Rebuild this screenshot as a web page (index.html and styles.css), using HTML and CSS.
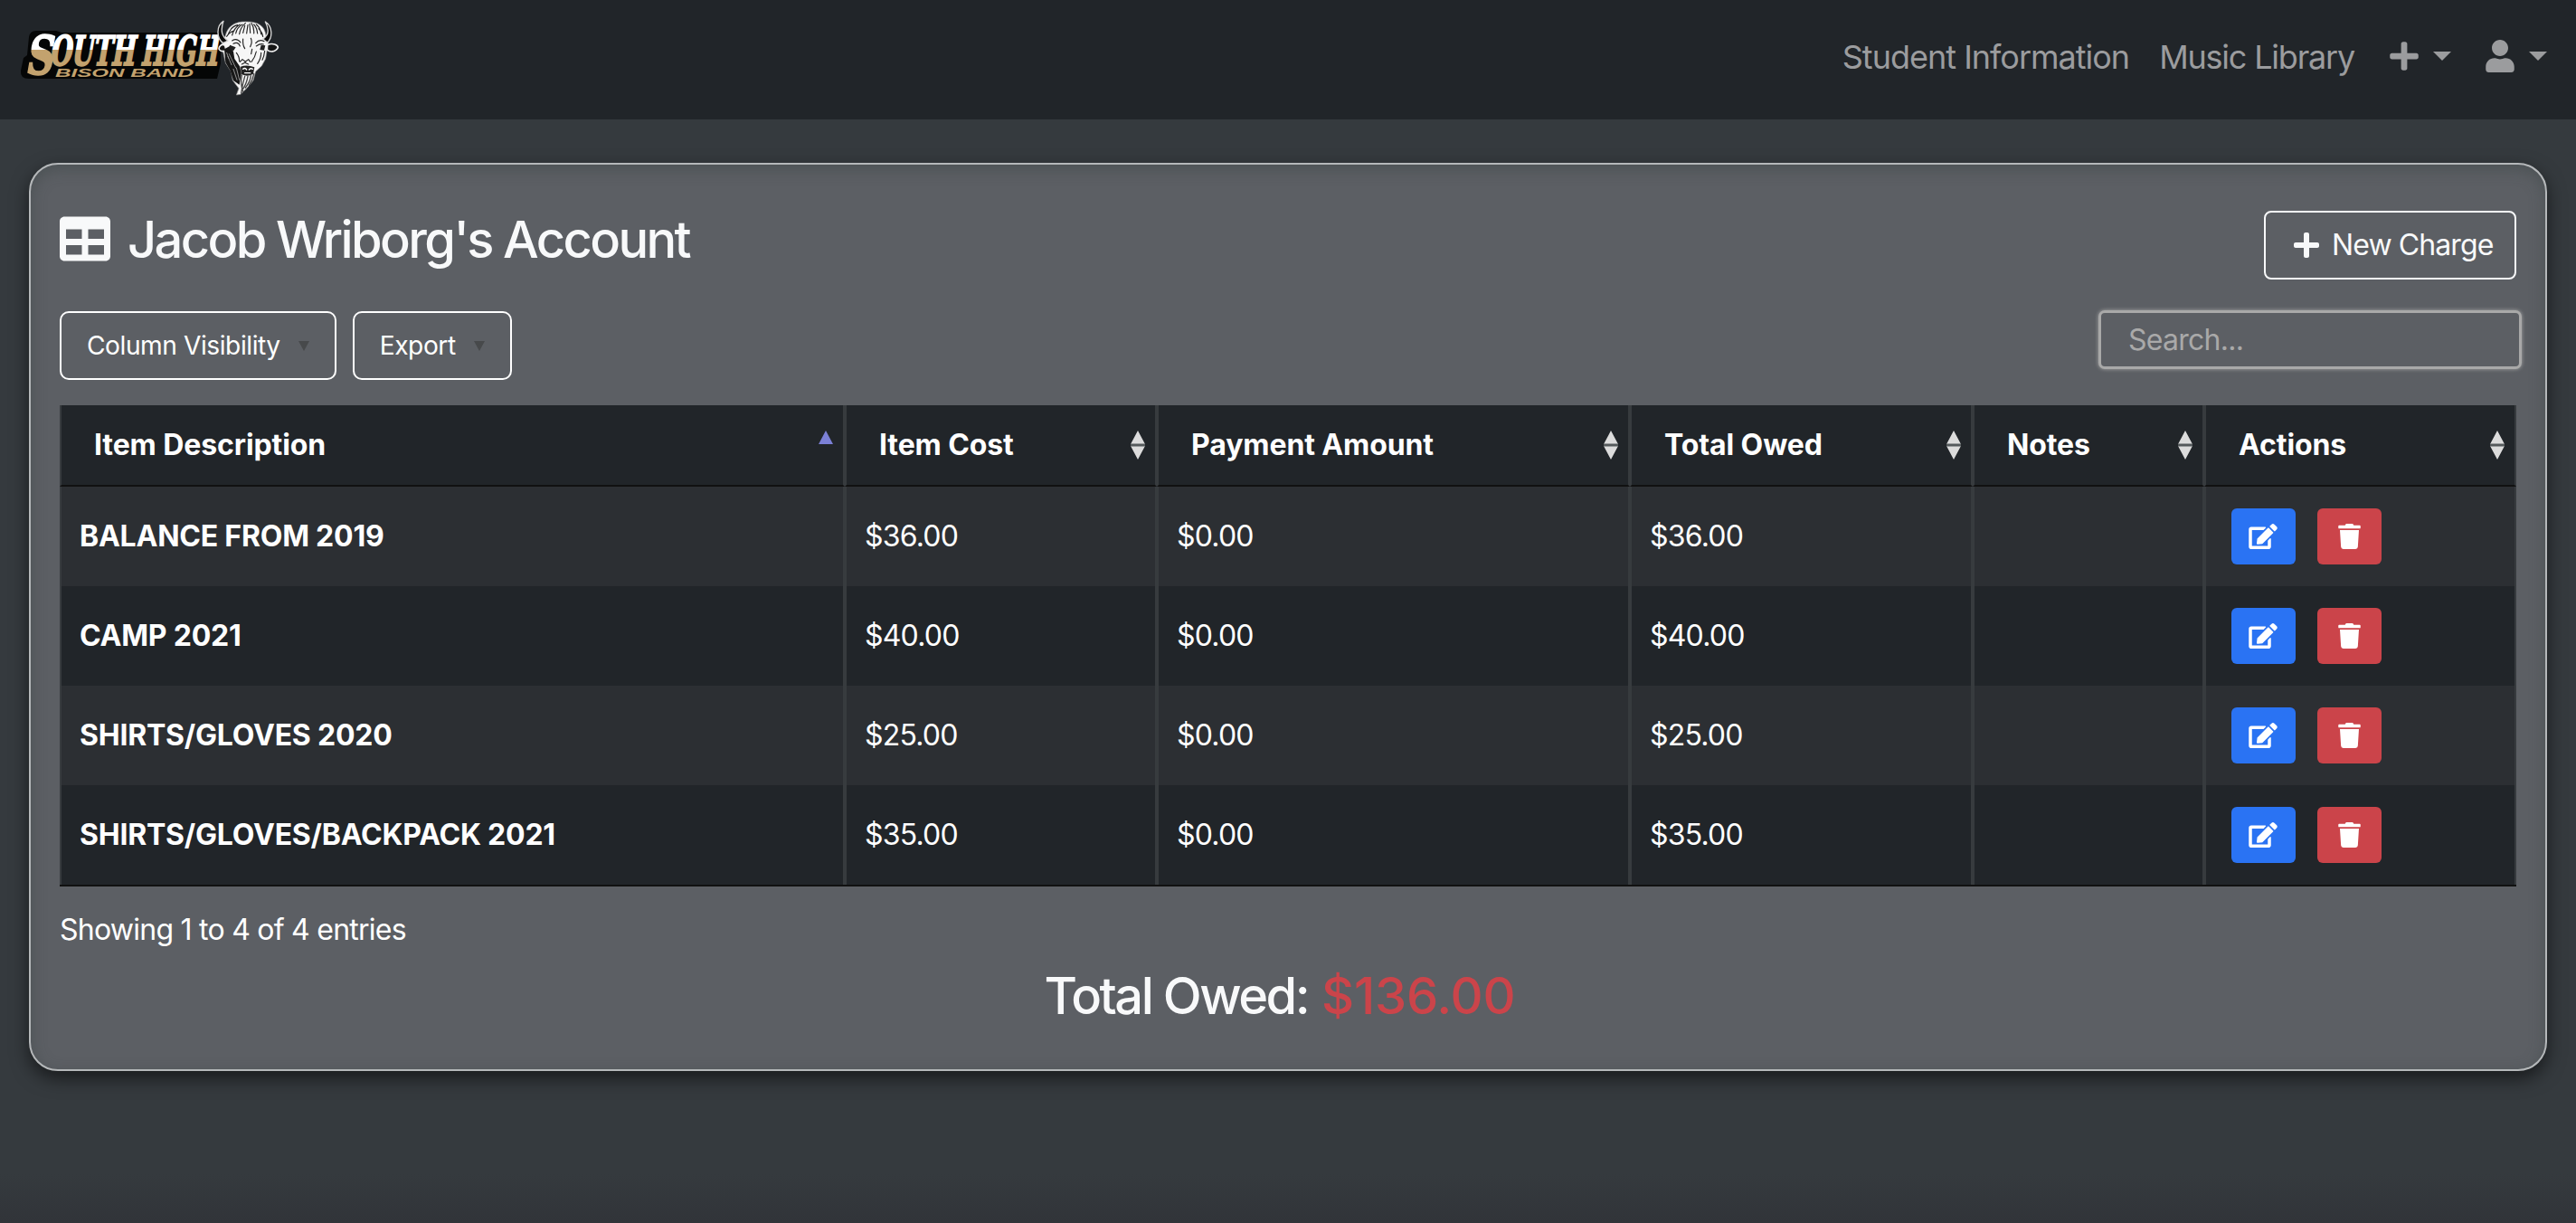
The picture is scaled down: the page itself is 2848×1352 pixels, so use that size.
FILE: index.html
```
<!DOCTYPE html>
<html lang="en">
<head>
<meta charset="utf-8">
<title>Jacob Wriborg's Account</title>
<link rel="stylesheet" href="styles.css">
</head>
<body>
<svg class="defs" aria-hidden="true">
  <symbol id="plus" viewBox="0 0 448 512"><path d="M416 208H272V64c0-17.670-14.330-32-32-32h-32c-17.670 0-32 14.330-32 32v144H32c-17.670 0-32 14.330-32 32v32c0 17.670 14.330 32 32 32h144v144c0 17.670 14.330 32 32 32h32c17.670 0 32-14.330 32-32V304h144c17.670 0 32-14.330 32-32v-32c0-17.670-14.330-32-32-32z"/></symbol>
  <symbol id="user" viewBox="0 0 448 512"><path d="M224 256c70.700 0 128-57.300 128-128S294.700 0 224 0 96 57.300 96 128s57.300 128 128 128zm89.600 32h-16.700c-22.200 10.200-46.900 16-72.900 16s-50.600-5.800-72.900-16h-16.700C60.200 288 0 348.200 0 422.400V464c0 26.500 21.500 48 48 48h352c26.500 0 48-21.500 48-48v-41.600c0-74.200-60.200-134.400-134.400-134.400z"/></symbol>
  <symbol id="table" viewBox="0 0 512 512"><path d="M464 32H48C21.490 32 0 53.490 0 80v352c0 26.510 21.490 48 48 48h416c26.510 0 48-21.490 48-48V80c0-26.510-21.490-48-48-48zM224 416H64v-96h160v96zm0-160H64v-96h160v96zm224 160H288v-96h160v96zm0-160H288v-96h160v96z"/></symbol>
  <symbol id="edit" viewBox="0 0 576 512"><path d="M402.600 83.200l90.200 90.200c3.800 3.800 3.800 10 0 13.800L274.400 405.600l-92.800 10.300c-12.400 1.400-22.900-9.100-21.500-21.500l10.300-92.800L388.800 83.200c3.800-3.800 10-3.800 13.800 0zm162-22.900l-48.800-48.800c-15.200-15.200-39.900-15.200-55.200 0l-35.400 35.400c-3.800 3.800-3.800 10 0 13.800l90.200 90.200c3.800 3.800 10 3.800 13.800 0l35.400-35.400c15.200-15.300 15.200-40 0-55.200zM384 346.200V448H64V128h229.800c3.200 0 6.200-1.300 8.500-3.500l40-40c7.600-7.600 2.200-20.500-8.500-20.500H48C21.500 64 0 85.500 0 112v352c0 26.500 21.500 48 48 48h352c26.500 0 48-21.500 48-48V306.200c0-10.700-12.900-16-20.500-8.500l-40 40c-2.200 2.300-3.500 5.300-3.500 8.500z"/></symbol>
  <symbol id="trash" viewBox="0 0 448 512"><path d="M432 32H312l-9.400-18.700A24 24 0 0 0 281.100 0H166.800a23.720 23.720 0 0 0-21.400 13.300L136 32H16A16 16 0 0 0 0 48v32a16 16 0 0 0 16 16h416a16 16 0 0 0 16-16V48a16 16 0 0 0-16-16zM53.200 467a48 48 0 0 0 47.900 45h245.800a48 48 0 0 0 47.900-45L416 128H32z"/></symbol>
  <symbol id="sort" viewBox="0 0 18 34"><path d="M9 1l8 15H1zM9 33l8-15H1z" fill="#dcdcdc"/><path d="M1 15.500h16v3H1z" fill="#555a5c"/></symbol>
  <symbol id="sort-asc" viewBox="0 0 18 34"><path d="M9 1l8 15H1z" fill="#7b80d6"/></symbol>
</svg>

<header class="navbar">
  <a class="brand" href="#" aria-label="South High Bison Band">
    <svg class="logo" viewBox="0 0 290 90">
      <defs>
        <linearGradient id="gold" gradientUnits="userSpaceOnUse" x1="0" y1="-36" x2="0" y2="0">
          <stop offset=".5" stop-color="#fff"/><stop offset=".5" stop-color="#c3a26e"/>
        </linearGradient>
      </defs>
      <path d="M10 25Q11 18 18 18H40L46 20H222V54L218 71H10Q0 71 1 62L4 48 8 45Z" fill="#050606"/>
      <g class="wordmark" transform="translate(0 57) skewX(-10)" fill="url(#gold)" stroke="url(#gold)">
        <text class="initial" x="7" y="9" textLength="30" lengthAdjust="spacingAndGlyphs">S</text>
        <text class="caps" x="32" y="-1" textLength="94" lengthAdjust="spacingAndGlyphs">OUTH</text>
        <text class="caps" x="133" y="-1" textLength="85" lengthAdjust="spacingAndGlyphs">HIGH</text>
      </g>
      <text class="tagline" x="39" y="69" textLength="153" lengthAdjust="spacingAndGlyphs">BISON BAND</text>
      <g transform="translate(208 -1) scale(.3333)" stroke-linecap="round" stroke-linejoin="round">
        <path d="M58 72C66 40 92 26 125 27 165 26 188 40 192 72L200 98 191 150 178 174 158 192 150 222 130 246 108 268 94 270 102 248 82 222 76 192 58 164 50 128 46 104Z" fill="#f6f6f6" stroke="#8d8d8d" stroke-width="2"/>
        <path d="M51 25C26 42 28 82 50 98L66 90C46 76 40 58 51 25ZM190 27C216 44 214 82 196 96L182 84C202 72 204 54 190 27Z" fill="#0b0b0b" stroke="#d8d8d8" stroke-width="4"/>
        <path d="M56 106C44 98 34 112 37 119 44 130 54 124 60 122ZM197 104C214 96 232 104 232 113 222 130 204 128 196 120Z" fill="#151515" stroke="#f0f0f0" stroke-width="5"/>
        <path d="M54 118L72 108 84 126 88 150 106 176 110 200 104 236 84 222 74 190 58 162Z" fill="#171717"/>
        <path d="M108 176Q130 168 154 178L150 200Q130 212 110 200ZM72 104l20 8-8 12-14-6ZM176 104l14 2-4 16-14-2Z" fill="#222"/>
        <path d="M116 184q6-6 12 2M136 186q6-6 12-2M122 197h18" fill="none" stroke="#fff" stroke-width="4"/>
        <g fill="none" stroke="#242424" stroke-width="3.500">
          <path d="M68 66Q78 42 98 38M80 72Q86 48 106 36M92 66Q96 46 114 36M104 68Q106 48 124 32M116 64L122 40M128 66L132 38M140 64L138 34M152 66Q154 48 144 32M164 66Q162 46 152 36M176 68Q174 48 160 36M62 76Q70 62 84 58M182 76Q180 62 168 50"/>
          <path d="M80 90Q96 80 108 96M84 100Q100 92 106 108M116 84Q114 104 122 116M142 82Q148 94 140 110M158 98Q170 84 186 92M160 108Q174 98 184 102M146 118l-3 16M160 126q-4 20-16 34M176 130q0 20-12 36M94 130q10 12 10 28M188 124q-2 18-8 30"/>
          <path d="M106 160l8-8 10 8 10-8 6 8M112 168l10-5 12 5"/>
        </g>
        <path d="M112 204Q106 232 116 258M122 208Q114 234 110 264M132 208Q128 234 112 256M142 206Q140 226 124 246M152 200Q148 222 136 238" fill="none" stroke="#444" stroke-width="4"/>
        <path d="M66 142l12 28M70 134l22 46M84 184l12 36M94 180l10 40M62 130l6 18" fill="none" stroke="#a8a8a8" stroke-width="2.500"/>
      </g>
    </svg>
  </a>
  <nav class="links">
    <a class="link" href="#">Student Information</a>
    <a class="link library" href="#">Music Library</a>
    <a class="drop add" href="#"><svg class="ico"><use href="#plus"/></svg><i class="caret"></i></a>
    <a class="drop account" href="#"><svg class="ico"><use href="#user"/></svg><i class="caret"></i></a>
  </nav>
</header>

<main class="card">
  <div class="title-row">
    <h1 class="title"><svg class="title-icon"><use href="#table"/></svg><span class="title-text">Jacob Wriborg's Account</span></h1>
    <button class="new-charge"><svg class="new-icon"><use href="#plus"/></svg><span>New Charge</span></button>
  </div>
  <div class="tools">
    <div class="buttons">
      <button class="tool"><span>Column Visibility</span><i class="down"></i></button>
      <button class="tool"><span>Export</span><i class="down"></i></button>
    </div>
    <input class="search" type="text" placeholder="Search...">
  </div>
  <table class="grid">
    <colgroup><col class="c1"><col class="c2"><col class="c3"><col class="c4"><col class="c5"><col class="c6"></colgroup>
    <thead>
      <tr>
        <th><div class="head"><span>Item Description</span><svg class="sort"><use href="#sort-asc"/></svg></div></th>
        <th><div class="head"><span>Item Cost</span><svg class="sort"><use href="#sort"/></svg></div></th>
        <th><div class="head"><span>Payment Amount</span><svg class="sort"><use href="#sort"/></svg></div></th>
        <th><div class="head"><span>Total Owed</span><svg class="sort"><use href="#sort"/></svg></div></th>
        <th><div class="head"><span>Notes</span><svg class="sort"><use href="#sort"/></svg></div></th>
        <th><div class="head"><span>Actions</span><svg class="sort"><use href="#sort"/></svg></div></th>
      </tr>
    </thead>
    <tbody>
      <tr><td class="item">BALANCE FROM 2019</td><td>$36.00</td><td>$0.00</td><td>$36.00</td><td></td>
        <td><div class="actions"><button class="act edit"><svg class="i-edit"><use href="#edit"/></svg></button><button class="act del"><svg class="i-del"><use href="#trash"/></svg></button></div></td></tr>
      <tr><td class="item">CAMP 2021</td><td>$40.00</td><td>$0.00</td><td>$40.00</td><td></td>
        <td><div class="actions"><button class="act edit"><svg class="i-edit"><use href="#edit"/></svg></button><button class="act del"><svg class="i-del"><use href="#trash"/></svg></button></div></td></tr>
      <tr><td class="item">SHIRTS/GLOVES 2020</td><td>$25.00</td><td>$0.00</td><td>$25.00</td><td></td>
        <td><div class="actions"><button class="act edit"><svg class="i-edit"><use href="#edit"/></svg></button><button class="act del"><svg class="i-del"><use href="#trash"/></svg></button></div></td></tr>
      <tr><td class="item">SHIRTS/GLOVES/BACKPACK 2021</td><td>$35.00</td><td>$0.00</td><td>$35.00</td><td></td>
        <td><div class="actions"><button class="act edit"><svg class="i-edit"><use href="#edit"/></svg></button><button class="act del"><svg class="i-del"><use href="#trash"/></svg></button></div></td></tr>
    </tbody>
  </table>
  <p class="info">Showing 1 to 4 of 4 entries</p>
  <h2 class="total"><span class="total-label">Total Owed:</span> <span class="owed">$136.00</span></h2>
</main>
</body>
</html>
```
FILE: styles.css
```
* { box-sizing: border-box; }
body { margin: 0; height: 1352px; overflow: hidden; background: linear-gradient(#353a3e 96%, #313439); color: #fff; font-family: Inter, "Liberation Sans", sans-serif; font-size: 32px; font-weight: 440; line-height: 48px; }
.defs { display: none; }
a { color: inherit; text-decoration: none; }
button { font: inherit; color: inherit; cursor: pointer; }

.navbar { height: 132px; background: #212529; display: flex; justify-content: space-between; align-items: flex-start; padding: 16px 32px 0 22px; }
.logo { display: block; width: 290px; height: 90px; }
.wordmark { font-family: "DejaVu Serif", serif; font-weight: 700; stroke-width: 2; }
.initial { font-size: 59px; }
.caps { font-size: 45px; }
.tagline { font: italic 700 13px "Liberation Sans", sans-serif; fill: #c3a26e; }
.links { display: flex; align-items: center; height: 92px; color: #9b9c9e; font-size: 36px; }
.link { letter-spacing: -1px; margin-right: 33px; padding-top: 2px; }
.library { letter-spacing: -1.2px; margin-right: 39px; }
.drop { display: flex; align-items: center; }
.add { margin-right: 38px; }
.ico { width: 32px; height: 36px; fill: currentColor; }
.caret { border: 10px solid transparent; border-top-color: currentColor; border-bottom: 0; margin-left: 16px; }

.card { margin: 48px 32px 0; height: 1004px; border: 2px solid #b5b8ba; border-radius: 32px; background: #5c5f64; padding: 51px 32px 0; box-shadow: 0 8px 20px rgba(0,0,0,.55), inset 0 5px 16px rgba(60,70,70,.5); }
.title-row { display: flex; justify-content: space-between; height: 111px; }
.title { margin: 0; display: flex; font-size: 56px; font-weight: 530; line-height: 64px; color: #f8f9fa; }
.title-text { letter-spacing: -2.6px; }
.title-icon { width: 56px; height: 56px; margin: 3px 19px 0 0; fill: currentColor; }
.new-charge { width: 279px; height: 76px; border: 2px solid #f8f9fa; border-radius: 8px; background: none; padding: 0 0 0 31px; display: flex; align-items: center; gap: 14px; color: #f8f9fa; letter-spacing: -.9px; }
.new-icon { width: 28px; height: 32px; fill: currentColor; }
.tools { display: flex; justify-content: space-between; height: 104px; margin-right: -6px; }
.buttons { display: flex; gap: 18px; }
.tool { height: 76px; border: 2px solid #fff; border-radius: 10px; background: none; padding: 0 28px; display: flex; align-items: center; font-size: 28.160px; letter-spacing: -.45px; }
.down { border: 6px solid transparent; border-top: 11px solid #47494b; border-bottom: 0; margin-left: 20px; }
.search { width: 468px; height: 65px; margin: -1px 0 0 0; border: 3px solid #a9a9a9; border-radius: 7px; background: #5c5f64; box-shadow: 0 0 4px #a9a9a9; font: 440 32px Inter, sans-serif; letter-spacing: -.75px; padding: 0 30px; color: #fff; }
.search::placeholder { color: #a9a9a9; opacity: 1; }

.grid { table-layout: fixed; width: 2716px; border-collapse: separate; border-spacing: 0; background: #212529; border-bottom: 2px solid #111; }
.c1 { width: 868px; } .c2 { width: 345px; } .c3 { width: 523px; } .c4 { width: 379px; } .c5 { width: 256px; } .c6 { width: 345px; }
th, td { border: 0 solid #373b3e; border-width: 0 2px; padding: 0; text-align: left; }
th { height: 90px; border-bottom: 2px solid #111; font-weight: 700; letter-spacing: -.1px; }
.head { display: flex; justify-content: space-between; align-items: center; padding: 0 10px 0 36px; }
.sort { width: 18px; height: 34px; }
td { height: 110px; padding-left: 20px; letter-spacing: -.8px; }
tbody tr:nth-child(odd) { background: #2c2f33; }
.item { font-weight: 700; letter-spacing: -.22px; }
.actions { display: flex; gap: 24px; padding-left: 8px; }
.act { width: 71px; height: 62px; border: 0; border-radius: 6px; padding: 0; display: flex; align-items: center; justify-content: center; }
.edit { background: #2a73f3; } .del { background: #cb444a; }
.i-edit { width: 32px; height: 28px; margin-right: 1px; fill: #fff; } .i-del { width: 25px; height: 28px; fill: #fff; }
.info { margin: 24px 0 0; letter-spacing: -.75px; }
.total { margin: 16px 18px 0 0; text-align: center; font-size: 56px; line-height: 67px; font-weight: 530; color: #f8f9fa; }
.total-label { letter-spacing: -2.5px; }
.owed { color: #cb444a; letter-spacing: -.2px; }
```
